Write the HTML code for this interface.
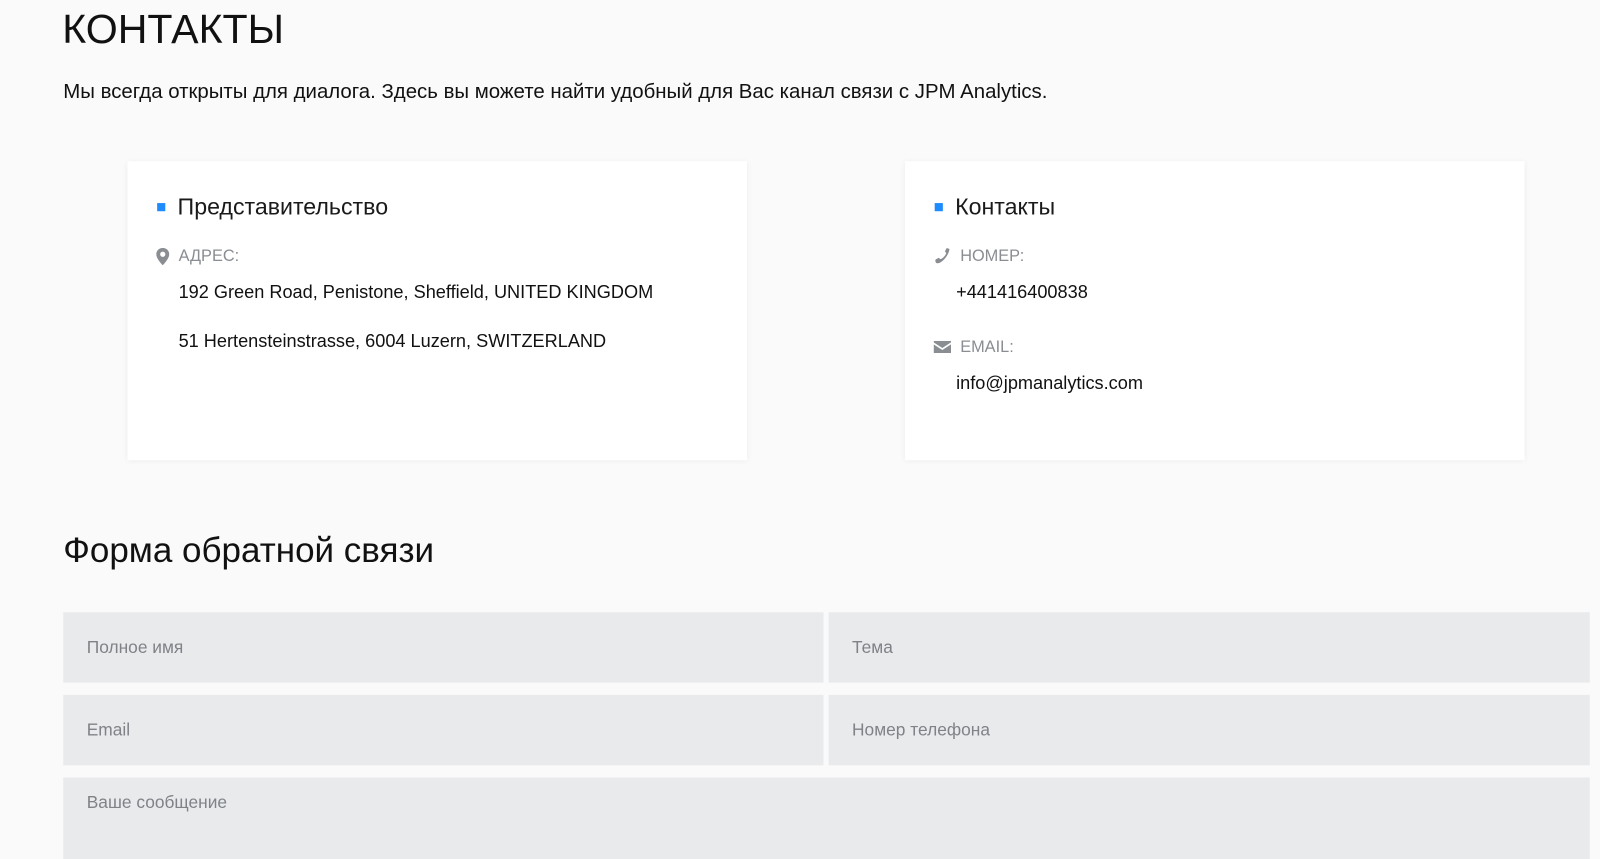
<!DOCTYPE html>
<html><head><meta charset="utf-8"><style>
body{margin:0;background:#fafafa;font-family:"Liberation Sans",sans-serif;color:#111;width:1600px;height:833px;overflow:hidden;position:relative}
#w{position:absolute;left:0;top:0;width:1568px;height:820px;transform:scale(1.0204);transform-origin:0 0}
.a{position:absolute;white-space:nowrap}
.card{position:absolute;top:158px;width:607px;height:293px;background:#fff;box-shadow:0 1px 6px rgba(0,0,0,.06)}
.h{font-size:22.7px;color:#1a1a1a}
.sq{display:inline-block;width:8px;height:8px;background:#1e8cff;margin-right:12px;vertical-align:3px}
.lab{font-size:16px;color:#8a8d91}
.v{font-size:17.8px;color:#111}
.in{position:absolute;background:#e9eaec;color:#7f8286;font-size:17px;box-sizing:border-box;padding-left:23px;display:flex;align-items:center}
</style></head><body><div id="w">
<div class="a" style="left:61px;top:6px;font-size:40.3px;color:#111">КОНТАКТЫ</div>
<div class="a" style="left:62px;top:79px;font-size:20px">Мы всегда открыты для диалога. Здесь вы можете найти удобный для Вас канал связи с JPM Analytics.</div>
<div class="card" style="left:125px">
 <div class="a h" style="left:29px;top:31px"><span class="sq"></span>Представительство</div>
 <svg class="a" style="left:28px;top:85px" width="13" height="17" viewBox="0 0 12 16"><path d="M6 0C2.7 0 0 2.6 0 5.8 0 10 6 16 6 16s6-6 6-10.2C12 2.6 9.3 0 6 0zm0 8.2A2.4 2.4 0 1 1 6 3.4a2.4 2.4 0 0 1 0 4.8z" fill="#8a8d91"/></svg>
 <div class="a lab" style="left:50px;top:85px">АДРЕС:</div>
 <div class="a v" style="left:50px;top:118px">192 Green Road, Penistone, Sheffield, UNITED KINGDOM</div>
 <div class="a v" style="left:50px;top:166px">51 Hertensteinstrasse, 6004 Luzern, SWITZERLAND</div>
</div>
<div class="card" style="left:887px">
 <div class="a h" style="left:29px;top:31px"><span class="sq"></span>Контакты</div>
 <svg class="a" style="left:28px;top:85px" width="17" height="16" viewBox="0 0 16 16"><path d="M15 1c-1-.6-2.5-1-3-.6L10.6 3.2c0 .6.8 1.2 1.2 1.6.3.4-2.4 5.6-5.8 6.2-.6-.4-1-1.3-1.7-1.3L1.4 11.3C1 12 1 13.5 2 14.6 5 17 14 9 15 1z" fill="#8a8d91"/></svg>
 <div class="a lab" style="left:54px;top:85px">НОМЕР:</div>
 <div class="a v" style="left:50px;top:118px">+441416400838</div>
 <svg class="a" style="left:28px;top:176px" width="17" height="12" viewBox="0 0 17 12"><path d="M0 0h17v1.5L8.5 7 0 1.5z M0 3.5l8.5 5.5 8.5-5.5V12H0z" fill="#8a8d91"/></svg>
 <div class="a lab" style="left:54px;top:174px">EMAIL:</div>
 <div class="a v" style="left:50px;top:207px">info@jpmanalytics.com</div>
</div>
<div class="a" style="left:62px;top:521px;font-size:34.3px;color:#111">Форма обратной связи</div>
<div class="in" style="left:62px;top:600px;width:745px;height:69px">Полное имя</div>
<div class="in" style="left:812px;top:600px;width:746px;height:69px">Тема</div>
<div class="in" style="left:62px;top:681px;width:745px;height:69px">Email</div>
<div class="in" style="left:812px;top:681px;width:746px;height:69px">Номер телефона</div>
<div class="in" style="left:62px;top:762px;width:1496px;height:80px;align-items:flex-start;padding-top:15px">Ваше сообщение</div>
</div></body></html>
